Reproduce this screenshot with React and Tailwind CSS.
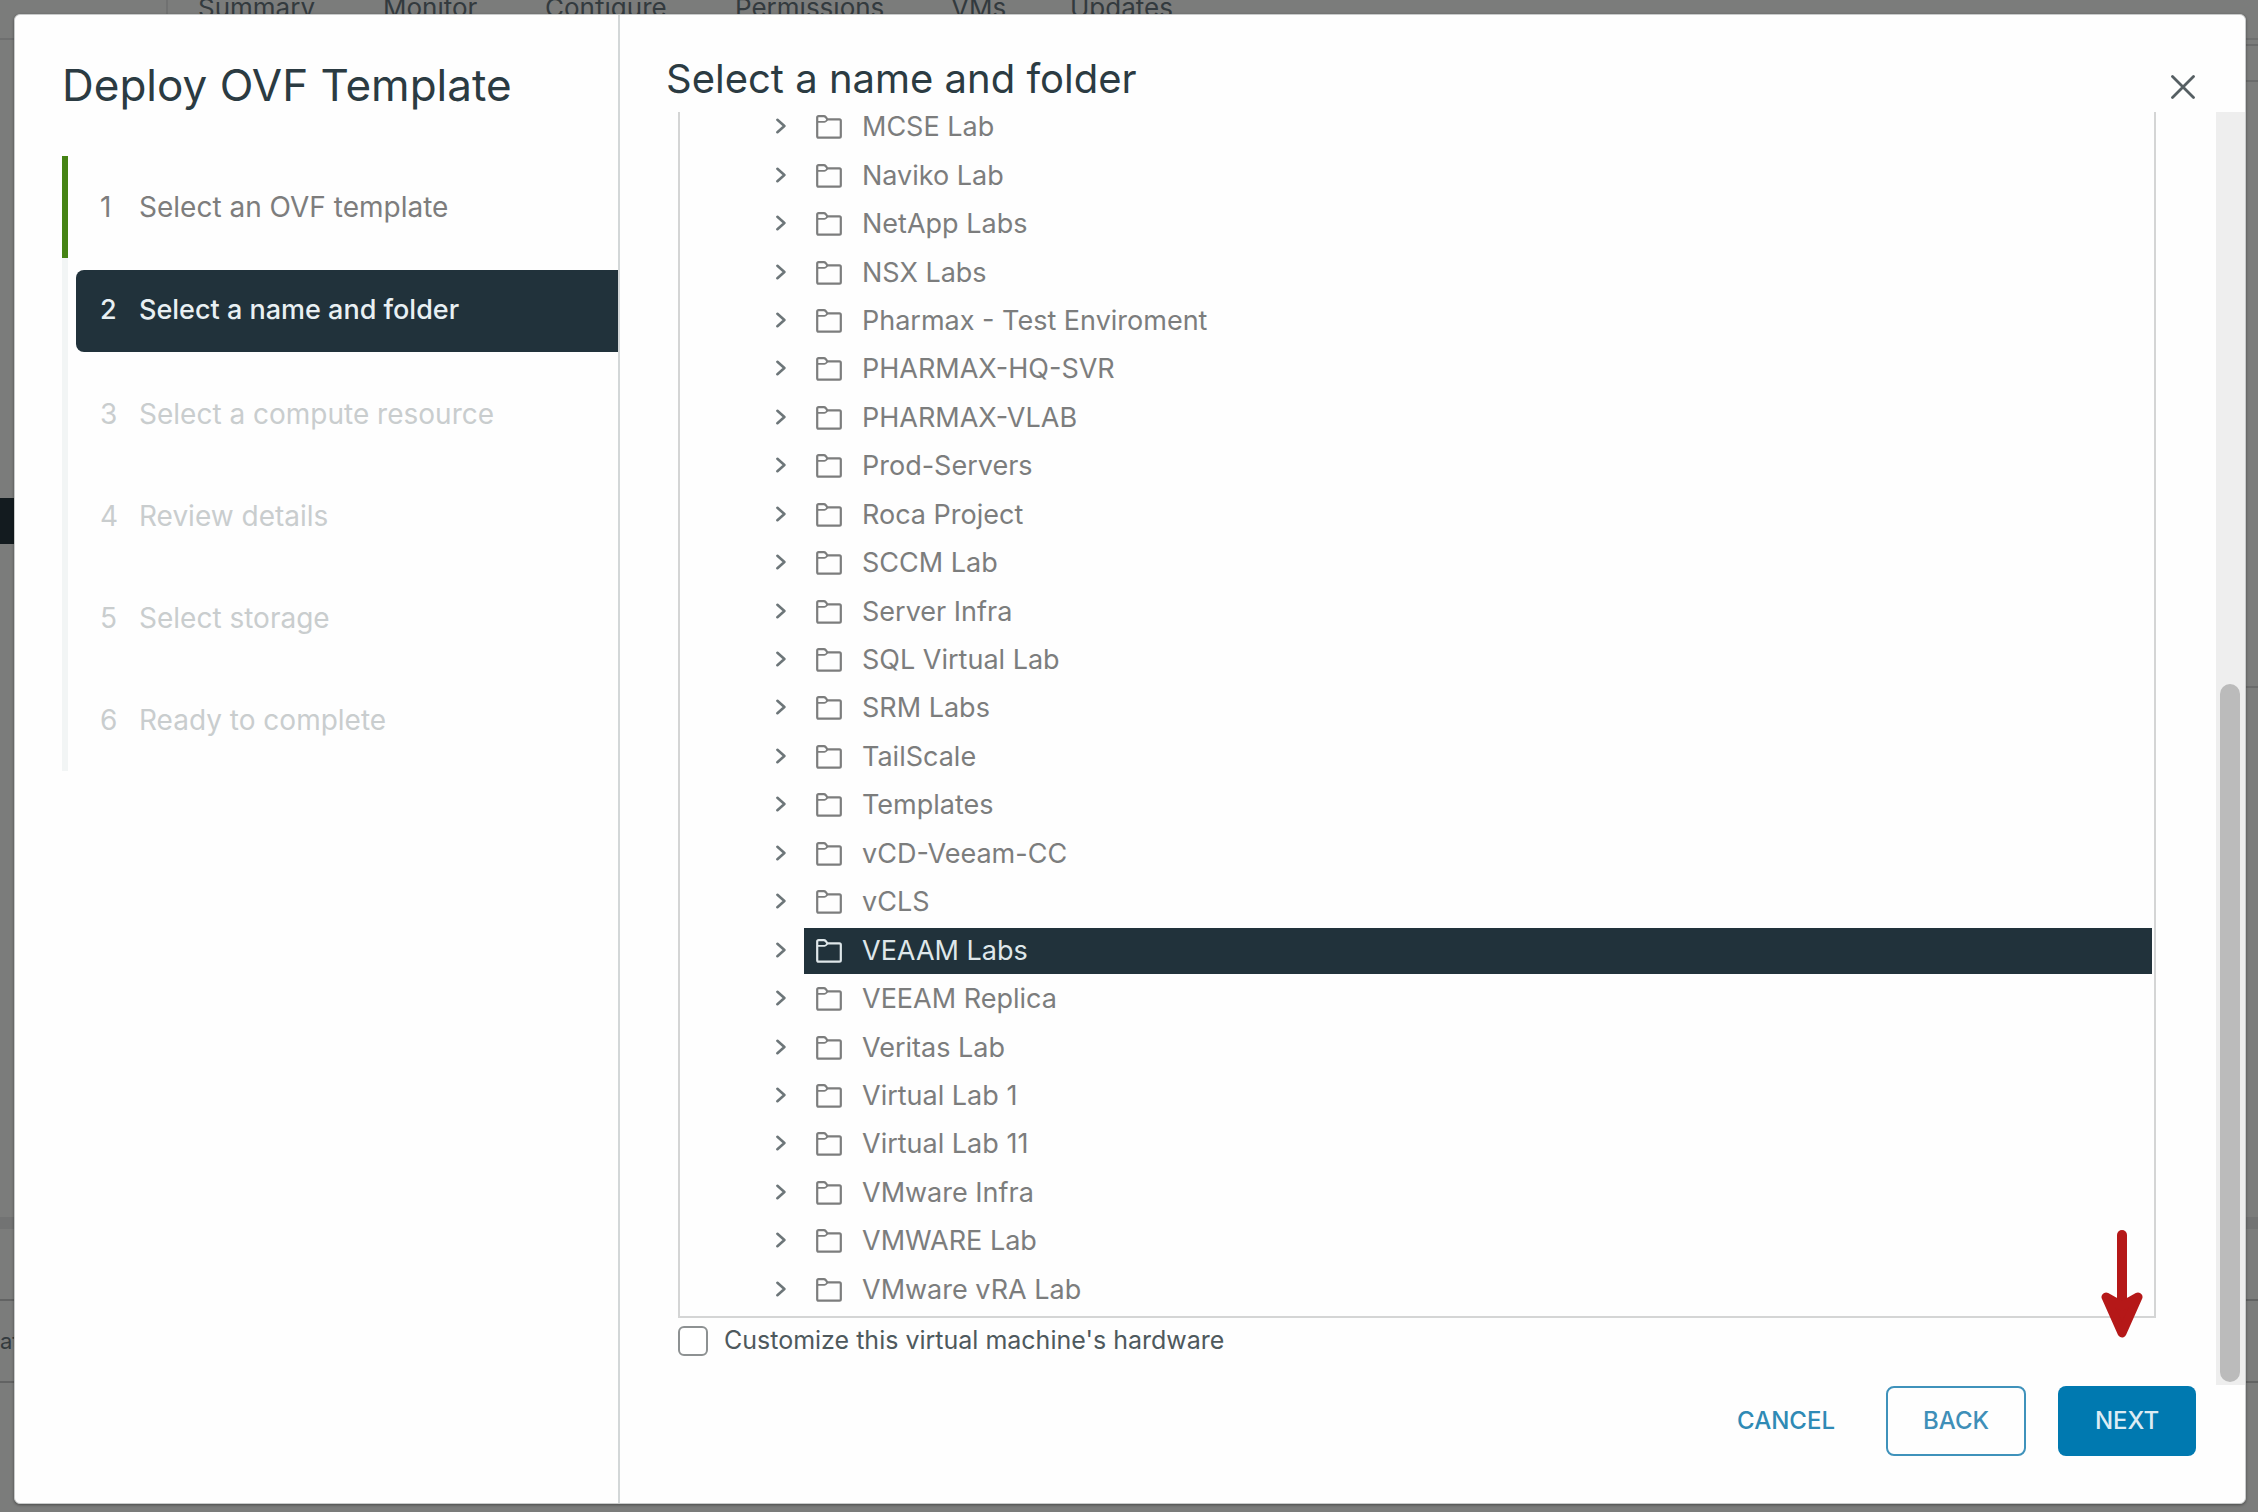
import React, { useState } from "react";

const TABS = [
  { name: "Summary", width: "w-[185px]" },
  { name: "Monitor", width: "w-[162px]" },
  { name: "Configure", width: "w-[190px]" },
  { name: "Permissions", width: "w-[216px]" },
  { name: "VMs", width: "w-[119px]" },
  { name: "Updates", width: "w-[120px]" },
];

const STEPS = [
  { name: "Select an OVF template", state: "done" },
  { name: "Select a name and folder", state: "current" },
  { name: "Select a compute resource", state: "todo" },
  { name: "Review details", state: "todo" },
  { name: "Select storage", state: "todo" },
  { name: "Ready to complete", state: "todo" },
];

const FOLDERS = [
  "MCSE Lab",
  "Naviko Lab",
  "NetApp Labs",
  "NSX Labs",
  "Pharmax - Test Enviroment",
  "PHARMAX-HQ-SVR",
  "PHARMAX-VLAB",
  "Prod-Servers",
  "Roca Project",
  "SCCM Lab",
  "Server Infra",
  "SQL Virtual Lab",
  "SRM Labs",
  "TailScale",
  "Templates",
  "vCD-Veeam-CC",
  "vCLS",
  "VEAAM Labs",
  "VEEAM Replica",
  "Veritas Lab",
  "Virtual Lab 1",
  "Virtual Lab 11",
  "VMware Infra",
  "VMWARE Lab",
  "VMware vRA Lab",
];

function FolderIcon() {
  return (
    <svg className="h-6 w-[26px] shrink-0" viewBox="0 0 26 24" fill="none" stroke="currentColor" strokeWidth="2.2" strokeLinejoin="round">
      <path d="M1.2 21.3V2.6Q1.2 1.2 2.6 1.2H7.8Q9 1.2 9.8 2.2L11.4 4.4H23.4Q24.8 4.4 24.8 5.8V21.3Q24.8 22.7 23.4 22.7H2.6Q1.2 22.7 1.2 21.3Z" />
      <path d="M1.2 6.8H8.4Q9.6 6.8 10.4 5.8L11.4 4.4" strokeWidth="1.8" />
    </svg>
  );
}

function Chevron() {
  return (
    <svg className="h-4 w-3" viewBox="0 0 12 16" fill="none" stroke="currentColor" strokeWidth="2.6" strokeLinecap="round" strokeLinejoin="round">
      <path d="M2.4 1.8L9.4 8L2.4 14.2" />
    </svg>
  );
}

function Backdrop() {
  return (
    <div className="flex h-full flex-col bg-[#7b7c7b]">
      <div className="flex h-10 shrink-0 border-b-2 border-[#6e6f6f]">
        <div className="w-[168px] shrink-0 border-r-2 border-[#707171]" />
        <nav className="flex pl-[30px] text-[26px] leading-4 text-[#333a3e]">
          {TABS.map((tab) => (
            <a key={tab.name} href="#tab" className={tab.width}>
              {tab.name}
            </a>
          ))}
        </nav>
      </div>
      <div className="flex min-h-0 flex-1 justify-between">
        <div className="flex w-8 flex-col justify-between">
          <div className="mt-[458px] h-[46px] bg-[#131b1f]" />
          <div className="mb-[129px]">
            <div className="mb-[70px] h-3 bg-[#727373]" />
            <div className="flex h-[84px] items-center overflow-hidden border-y-2 border-[#626363] text-[22px] text-[#333a3e]">at</div>
          </div>
        </div>
        <div className="flex w-8 flex-col">
          <div className="mt-1 h-[38px] border-y-2 border-[#6a6b6b]" />
          <div className="mt-[604px] h-[2px] bg-[#6a6b6b]" />
          <div className="mt-auto mb-[129px]">
            <div className="mb-[70px] h-3 bg-[#727373]" />
            <div className="h-[84px] border-y-2 border-[#626363]" />
          </div>
        </div>
      </div>
    </div>
  );
}

function Step({ step, number }) {
  const current = step.state === "current";
  const done = step.state === "done";
  return (
    <li className={current ? "flex h-[105px] items-center" : "flex h-[102px] items-center"}>
      <span className={done ? "h-full w-1.5 shrink-0 bg-[#458314]" : "h-full w-1.5 shrink-0 bg-[#f2f5f5]"} />
      <button
        type="button"
        disabled={step.state === "todo"}
        aria-current={current ? "step" : undefined}
        className={
          current
            ? "ml-2 flex h-[82px] flex-1 items-center rounded-l-lg bg-[#21323b] pl-6 text-left text-[27px] font-medium text-[#e9f0f3]"
            : done
              ? "ml-2 flex h-[82px] flex-1 items-center pl-6 text-left text-[28px] text-[#7d7d7d]"
              : "ml-2 flex h-[82px] flex-1 items-center pl-6 text-left text-[28px] text-[#c9cdce]"
        }
      >
        <span className="w-[39px]">{number}</span>
        {step.name}
      </button>
    </li>
  );
}

export default function App() {
  const [selected, setSelected] = useState("VEAAM Labs");
  const [customize, setCustomize] = useState(false);

  return (
    <div className="relative h-screen overflow-hidden font-['Inter',sans-serif]">
      <Backdrop />
      <div className="absolute inset-0 flex pt-3.5 pr-3 pb-2 pl-3.5">
        <div role="dialog" aria-label="Deploy OVF Template" className="flex min-w-0 flex-1 overflow-hidden rounded-md border border-[#c9cbcb] bg-[#fefefe] shadow-[0_1px_3px_rgba(0,0,0,0.4)]">
          <aside className="flex w-[605px] shrink-0 flex-col border-r-2 border-[#d3d7d8] pl-[47px]">
            <h1 className="pt-[43px] text-[44px] leading-[54px] text-[#2b3b42]">Deploy OVF Template</h1>
            <ol className="mt-11 flex flex-col">
              {STEPS.map((step, i) => (
                <Step key={step.name} step={step} number={i + 1} />
              ))}
            </ol>
          </aside>

          <section className="flex min-w-0 flex-1 flex-col">
            <header className="flex h-[97px] shrink-0 justify-between pr-[46px] pl-[46px]">
              <h2 className="pt-10 text-[40px] leading-[48px] text-[#2b3b42]">Select a name and folder</h2>
              <button type="button" aria-label="Close" className="mt-14 flex size-8 items-center justify-center text-[#565f63]">
                <svg className="size-6" viewBox="0 0 24 24" fill="none" stroke="currentColor" strokeWidth="2.8" strokeLinecap="round">
                  <path d="M1.5 1.5L22.5 22.5M22.5 1.5L1.5 22.5" />
                </svg>
              </button>
            </header>

            <div className="flex min-h-0 flex-1">
              <div className="flex min-w-0 flex-1 flex-col pr-[60px] pl-[58px]">
                <div className="flex min-h-0 flex-1 flex-col overflow-hidden border-x-2 border-b-2 border-[#d4d5d5] pb-0.5">
                  <ul role="tree" className="-mt-[9px] flex min-h-0 flex-1 flex-col text-[27px] leading-8">
                    {FOLDERS.map((name) => (
                      <li key={name} role="treeitem" aria-selected={name === selected} className="flex min-h-0 flex-1 items-center pr-0.5">
                        <button type="button" aria-label={"Expand " + name} className="mr-2 ml-[86px] flex w-[30px] shrink-0 justify-center pb-0.5 text-[#6d7679]">
                          <Chevron />
                        </button>
                        <button
                          type="button"
                          onClick={() => setSelected(name)}
                          className={
                            name === selected
                              ? "flex h-[46px] flex-1 items-center gap-5 bg-[#21323b] pl-3 text-left text-[#dfe7ea]"
                              : "flex h-[46px] flex-1 items-center gap-5 pl-3 text-left text-[#7c7d7d]"
                          }
                        >
                          <FolderIcon />
                          {name}
                        </button>
                      </li>
                    ))}
                  </ul>
                </div>
                <div className="flex h-[67px] shrink-0 items-start gap-4 pt-2">
                  <input
                    id="customize"
                    type="checkbox"
                    checked={customize}
                    onChange={(e) => setCustomize(e.target.checked)}
                    className="size-[30px] appearance-none rounded-md border-2 border-[#8d9192] bg-white checked:bg-[#0079ad]"
                  />
                  <label htmlFor="customize" className="text-[25px] leading-7 text-[#4e595d]">
                    Customize this virtual machine's hardware
                  </label>
                </div>
              </div>
              <div className="flex w-[29px] shrink-0 flex-col bg-[#eeeeee] pr-[5px] pb-[3px] pl-1">
                <div className="mt-auto h-[55%] rounded-full bg-[#bbbbbb]" />
              </div>
            </div>

            <footer className="flex h-[118px] shrink-0 items-start justify-end pt-px pr-[49px] text-2xl font-medium">
              <button type="button" className="mr-[51px] h-[70px] text-[#2f8ab5]">CANCEL</button>
              <button type="button" className="mr-8 h-[70px] w-[140px] rounded-lg border-2 border-[#3f92bb] text-[#3f8fb8]">BACK</button>
              <button type="button" className="h-[70px] w-[138px] rounded-lg bg-[#0079b0] text-[#dcecf4]">NEXT</button>
            </footer>
          </section>
        </div>
      </div>

      <div className="pointer-events-none absolute right-[115px] bottom-[174px]">
        <svg className="h-[108px] w-[42px]" viewBox="0 0 42 108" fill="#b51818" stroke="#b51818" strokeLinecap="round" strokeLinejoin="round">
          <path d="M21 5V70" strokeWidth="10" />
          <path d="M5 67L21 76L37 67L21 103Z" strokeWidth="9" />
        </svg>
      </div>
    </div>
  );
}
